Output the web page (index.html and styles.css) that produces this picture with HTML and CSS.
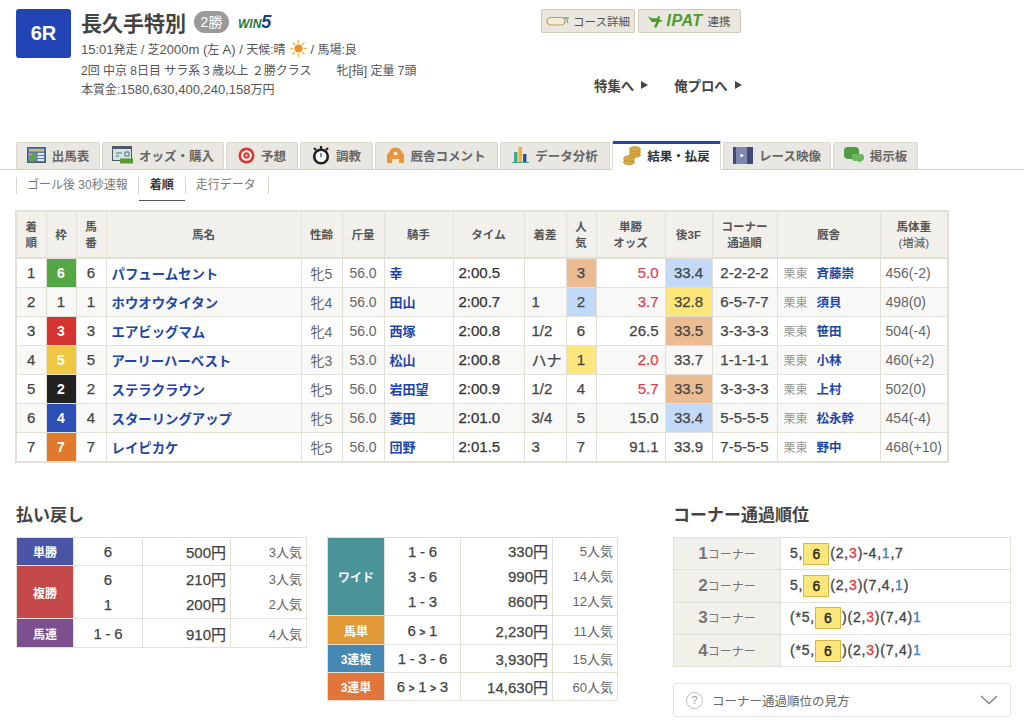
FILE: index.html
```html
<!DOCTYPE html>
<html lang="ja">
<head>
    <meta charset="UTF-8">
    <title>長久手特別 結果・払戻</title>
    <link rel="stylesheet" href="styles.css">
</head>
<body>
    <!-- Race header -->
    <div class="race-header">
        <div class="race-num">6R</div>
        <div class="race-info">
            <div class="race-title">
                <h1>長久手特別</h1>
                <span class="grade">2勝</span>
                <span class="win5"><i class="win5-a">WIN</i><i class="win5-b">5</i></span>
            </div>
            <div class="race-data1"><span><span class="en">15:01</span>発走 / 芝<span class="en">2000m (</span>左 <span class="en">A) /</span> 天候:晴</span>
                <svg class="sun" width="17" height="17" viewBox="0 0 17 17"><circle cx="8.5" cy="8.5" r="4" fill="#e8912c"/><g stroke="#ecb04e" stroke-width="1.4" stroke-linecap="round"><path d="M8.5 .8v2M8.5 14.2v2M.8 8.5h2M14.2 8.5h2M3 3l1.4 1.4M12.6 12.6L14 14M3 14l1.4-1.4M12.6 4.4L14 3"/></g></svg>
                <span><span class="en">/</span> 馬場:良</span></div>
            <div class="race-data2"><span class="race-class">2回 中京 8日目 サラ系３歳以上 ２勝クラス</span><span>牝[指] 定量 7頭</span></div>
            <div class="race-data3">本賞金:<span class="en">1580,630,400,240,158</span>万円</div>
        </div>
        <div class="race-side">
            <div class="side-buttons">
                <a class="side-btn course-btn">
                    <svg width="24" height="12" viewBox="0 0 24 12"><rect x="1" y="2.5" width="18" height="7.5" rx="3.7" fill="#f3ecd8" stroke="#c79a55" stroke-width="1.2"/><path d="M17 3h6M20 2l2 6" stroke="#4fa37a"/></svg>
                    コース詳細</a>
                <a class="side-btn ipat-btn">
                    <svg width="15" height="13" viewBox="0 0 16 13"><path d="M0 1l4 2h6l1-3 2 2-1 2 4 2-4 1-3 6H6l3-6H4L2 4z" fill="#4e9b2c"/></svg>
                    <i class="ipat-logo">IPAT</i><span class="ipat-text">連携</span></a>
            </div>
            <div class="side-links">
                <a>特集へ<span class="arrow"></span></a>
                <a>俺プロへ<span class="arrow"></span></a>
            </div>
        </div>
    </div>

    <!-- Tabs -->
    <ul class="tabs">
        <li><svg width="19" height="16" viewBox="0 0 19 16"><rect x=".5" y=".5" width="18" height="15" fill="#5b7ba8" stroke="#4c5a70"/><rect x="2" y="2" width="15" height="2.5" fill="#e3b85c"/><rect x="2" y="6" width="7" height="8" fill="#5aa34a"/><path d="M2 6h4l-4 4z" fill="#e69a3a"/><rect x="10.5" y="6" width="6.5" height="2" fill="#dfe8f0"/><rect x="10.5" y="9" width="6.5" height="2" fill="#dfe8f0"/><rect x="10.5" y="12" width="6.5" height="2" fill="#dfe8f0"/></svg>出馬表</li>
        <li><svg width="21" height="18" viewBox="0 0 21 18"><rect x=".5" y=".5" width="19" height="14" fill="#d5e3e3" stroke="#4d5a66"/><rect x=".5" y=".5" width="19" height="2.5" fill="#4d5a66"/><path d="M4 7h6M4 10h3M13 6h4v4h-4z" stroke="#48708c" fill="none"/><rect x="8" y="12.5" width="13" height="5" fill="#5d9a2e"/></svg>オッズ・購入</li>
        <li><svg width="17" height="17" viewBox="0 0 17 17"><circle cx="8.5" cy="8.5" r="8" fill="#d83a32"/><circle cx="8.5" cy="8.5" r="5.3" fill="#fff"/><circle cx="8.5" cy="8.5" r="3.2" fill="#d83a32"/><circle cx="8.5" cy="8.5" r="1.2" fill="#f5d5d0"/></svg>予想</li>
        <li><svg width="18" height="20" viewBox="0 0 18 20"><circle cx="9" cy="11.5" r="6.8" fill="#fff" stroke="#222" stroke-width="2.6"/><path d="M9 1v3M2 3l2 2M16 3l-2 2" stroke="#222" stroke-width="2.2"/><path d="M9 8v4" stroke="#3a5fb0" stroke-width="1.4"/></svg>調教</li>
        <li><svg width="17" height="16" viewBox="0 0 17 16"><path d="M0 16V8l4-6q4.5-3 9 0l4 6v8z" fill="#e8933f"/><path d="M5 16v-4h7v4z" fill="#fbe7c8"/><circle cx="8.5" cy="6.5" r="2" fill="#fbe7c8"/></svg>厩舎コメント</li>
        <li><svg width="17" height="18" viewBox="0 0 17 18"><rect x="2" y="6" width="3.5" height="10" fill="#3fa98f"/><rect x="6.5" y="1" width="3.5" height="15" fill="#efb12f"/><rect x="11" y="8" width="3.5" height="8" fill="#2b4f9e"/><path d="M0 16.5h17" stroke="#3fa98f"/></svg>データ分析</li>
        <li class="tab-on"><svg width="18" height="20" viewBox="0 0 18 20"><g fill="#d9ab3f" stroke="#a9822c" stroke-width=".6"><ellipse cx="12" cy="9" rx="5.5" ry="2.6"/><ellipse cx="12" cy="6" rx="5.5" ry="2.6"/><ellipse cx="12" cy="3.2" rx="5.5" ry="2.6"/><ellipse cx="6" cy="16" rx="5.5" ry="2.8"/><ellipse cx="6" cy="12.5" rx="5.5" ry="2.8"/></g></svg>結果・払戻</li>
        <li><svg width="20" height="17" viewBox="0 0 20 17"><rect width="20" height="17" fill="#3f4a78"/><rect x="3" width="11" height="17" fill="#7d88ae"/><path d="M7.5 6.5l3.5 2-3.5 2z" fill="#fff"/></svg>レース映像</li>
        <li><svg width="20" height="16" viewBox="0 0 20 16"><rect width="15" height="12" rx="4" fill="#4e9b44"/><path d="M8 7h9a3 3 0 0 1 3 3v1a3 3 0 0 1-3 3l-1 2-2-2h-3a3 3 0 0 1-3-3z" fill="#6cb55d"/></svg>掲示板</li>
    </ul>

    <!-- Sub navigation -->
    <ul class="subnav">
        <li>ゴール後 30秒速報</li>
        <li class="sub-on">着順</li>
        <li>走行データ</li>
    </ul>

    <!-- Race result -->
    <table class="result">
        <colgroup>
            <col class="c-30"><col class="c-30"><col class="c-30"><col class="c-name"><col class="c-41"><col class="c-42"><col class="c-jockey"><col class="c-time"><col class="c-42"><col class="c-30"><col class="c-odds"><col class="c-47"><col class="c-corner"><col class="c-stable"><col class="c-weight">
        </colgroup>
        <tr>
            <th>着<br>順</th><th>枠</th><th>馬<br>番</th><th>馬名</th><th>性齢</th><th>斤量</th><th>騎手</th><th>タイム</th><th>着差</th><th>人<br>気</th><th>単勝<br>オッズ</th><th>後3F</th><th>コーナー<br>通過順</th><th>厩舎</th><th>馬体重<br><span class="th-sub">(増減)</span></th>
        </tr>
        <tr>
            <td>1</td><td class="waku w6">6</td><td>6</td><td class="horse">パフュームセント</td><td class="lite">牝5</td><td class="lite">56.0</td><td class="jockey">幸</td><td class="time">2:00.5</td><td class="left"></td><td class="pop3">3</td><td class="odds low">5.0</td><td class="f1">33.4</td><td>2-2-2-2</td><td class="stable"><span>栗東</span><a>斉藤崇</a></td><td class="kg">456(-2)</td>
        </tr>
        <tr>
            <td>2</td><td>1</td><td>1</td><td class="horse">ホウオウタイタン</td><td class="lite">牝4</td><td class="lite">56.0</td><td class="jockey">田山</td><td class="time">2:00.7</td><td class="left">1</td><td class="f1">2</td><td class="odds low">3.7</td><td class="f2">32.8</td><td>6-5-7-7</td><td class="stable"><span>栗東</span><a>須貝</a></td><td class="kg">498(0)</td>
        </tr>
        <tr>
            <td>3</td><td class="waku w3">3</td><td>3</td><td class="horse">エアビッグマム</td><td class="lite">牝4</td><td class="lite">56.0</td><td class="jockey">西塚</td><td class="time">2:00.8</td><td class="left">1/2</td><td>6</td><td class="odds">26.5</td><td class="pop3">33.5</td><td>3-3-3-3</td><td class="stable"><span>栗東</span><a>笹田</a></td><td class="kg">504(-4)</td>
        </tr>
        <tr>
            <td>4</td><td class="waku w5">5</td><td>5</td><td class="horse">アーリーハーベスト</td><td class="lite">牝3</td><td class="lite">53.0</td><td class="jockey">松山</td><td class="time">2:00.8</td><td class="left">ハナ</td><td class="f2">1</td><td class="odds low">2.0</td><td>33.7</td><td>1-1-1-1</td><td class="stable"><span>栗東</span><a>小林</a></td><td class="kg">460(+2)</td>
        </tr>
        <tr>
            <td>5</td><td class="waku w2">2</td><td>2</td><td class="horse">ステラクラウン</td><td class="lite">牝5</td><td class="lite">56.0</td><td class="jockey">岩田望</td><td class="time">2:00.9</td><td class="left">1/2</td><td>4</td><td class="odds low">5.7</td><td class="pop3">33.5</td><td>3-3-3-3</td><td class="stable"><span>栗東</span><a>上村</a></td><td class="kg">502(0)</td>
        </tr>
        <tr>
            <td>6</td><td class="waku w4">4</td><td>4</td><td class="horse">スターリングアップ</td><td class="lite">牝5</td><td class="lite">56.0</td><td class="jockey">菱田</td><td class="time">2:01.0</td><td class="left">3/4</td><td>5</td><td class="odds">15.0</td><td class="f1">33.4</td><td>5-5-5-5</td><td class="stable"><span>栗東</span><a>松永幹</a></td><td class="kg">454(-4)</td>
        </tr>
        <tr>
            <td>7</td><td class="waku w7">7</td><td>7</td><td class="horse">レイピカケ</td><td class="lite">牝5</td><td class="lite">56.0</td><td class="jockey">団野</td><td class="time">2:01.5</td><td class="left">3</td><td>7</td><td class="odds">91.1</td><td>33.9</td><td>7-5-5-5</td><td class="stable"><span>栗東</span><a>野中</a></td><td class="kg">468(+10)</td>
        </tr>
    </table>

    <!-- Payouts and corners -->
    <div class="bottom">
        <div class="pay-col">
            <h2>払い戻し</h2>
            <table class="pay">
                <colgroup><col class="p-label"><col class="p-l-num"><col class="p-l-yen"><col></colgroup>
                <tr class="r28"><th class="tan">単勝</th><td class="num">6</td><td class="yen">500円</td><td class="ninki">3人気</td></tr>
                <tr class="r53"><th class="fuku">複勝</th><td class="num multi">6<br>1</td><td class="yen multi">210円<br>200円</td><td class="ninki multi">3人気<br>2人気</td></tr>
                <tr class="r29"><th class="uren">馬連</th><td class="num">1 - 6</td><td class="yen">910円</td><td class="ninki">4人気</td></tr>
            </table>
        </div>
        <div class="pay-col pay-col2">
            <table class="pay">
                <colgroup><col class="p-label"><col class="p-c-num"><col class="p-c-yen"><col></colgroup>
                <tr class="r78"><th class="wide">ワイド</th><td class="num multi">1 - 6<br>3 - 6<br>1 - 3</td><td class="yen multi">330円<br>990円<br>860円</td><td class="ninki multi">5人気<br>14人気<br>12人気</td></tr>
                <tr class="r29"><th class="utan">馬単</th><td class="num">6 <span class="gt">&gt;</span> 1</td><td class="yen">2,230円</td><td class="ninki">11人気</td></tr>
                <tr class="r28"><th class="fuku3">3連複</th><td class="num">1 - 3 - 6</td><td class="yen">3,930円</td><td class="ninki">15人気</td></tr>
                <tr class="r28"><th class="tan3">3連単</th><td class="num">6 <span class="gt">&gt;</span> 1 <span class="gt">&gt;</span> 3</td><td class="yen">14,630円</td><td class="ninki">60人気</td></tr>
            </table>
        </div>
        <div class="corner-col">
            <h2>コーナー通過順位</h2>
            <table class="corner">
                <tr><th><b>1</b>コーナー</th><td>5,<span class="top">6</span>(2,<span class="red">3</span>)-4,<span class="blue">1</span>,7</td></tr>
                <tr><th><b>2</b>コーナー</th><td>5,<span class="top">6</span>(2,<span class="red">3</span>)(7,4,<span class="blue">1</span>)</td></tr>
                <tr><th><b>3</b>コーナー</th><td>(*5,<span class="top">6</span>)(2,<span class="red">3</span>)(7,4)<span class="blue">1</span></td></tr>
                <tr><th><b>4</b>コーナー</th><td>(*5,<span class="top">6</span>)(2,<span class="red">3</span>)(7,4)<span class="blue">1</span></td></tr>
            </table>
            <div class="help">
                <span class="help-mark">?</span>
                <span class="help-text">コーナー通過順位の見方</span>
                <svg width="18" height="10" viewBox="0 0 18 10"><path d="M1 1l8 7.5L17 1" fill="none" stroke="#888" stroke-width="1.6"/></svg>
            </div>
        </div>
    </div>
</body>
</html>
```

FILE: styles.css
```css
/* Basic reset */
* {
    margin: 0;
    padding: 0;
    box-sizing: border-box;
}

body {
    font-family: "Liberation Sans", "Noto Sans CJK JP", sans-serif;
    background-color: #fff;
    color: #333;
    font-size: 12px;
}

ul {
    list-style: none;
}

/* Race header */
.race-header {
    display: flex;
    height: 141px;
    padding: 9px 0 0 16px;
}

.race-num {
    width: 55px;
    height: 49px;
    background-color: #2344b4;
    border-radius: 3px;
    color: #fff;
    font-size: 20px;
    font-weight: bold;
    line-height: 49px;
    text-align: center;
}

.race-info {
    width: 460px;
    margin-left: 10px;
}

.race-title {
    display: flex;
    align-items: center;
    height: 28px;
    margin-top: -1px;
}

.race-title h1 {
    font-size: 21px;
    font-weight: bold;
    color: #444;
}

.grade {
    width: 35px;
    height: 22px;
    margin-left: 8px;
    background-color: #999;
    border-radius: 11px;
    color: #fff;
    font-size: 14px;
    line-height: 22px;
    text-align: center;
}

.win5 {
    margin-left: 9px;
    font-weight: bold;
    font-size: 14px;
}

.win5-a {
    color: #1d7a3c;
    font-size: 12px;
}

.win5-b {
    color: #1c3d80;
    font-size: 18px;
}

.en {
    font-size: 13px;
}

.race-data1 {
    display: flex;
    align-items: center;
    gap: 4px;
    margin-top: 3px;
    height: 18px;
    color: #555;
}

.race-data2 {
    margin-top: 5px;
    height: 18px;
    line-height: 18px;
    color: #555;
}

.race-class {
    margin-right: 25px;
}

.race-data3 {
    margin-top: 1px;
    height: 18px;
    line-height: 18px;
    color: #555;
}

/* Buttons right of the title */
.side-buttons {
    display: flex;
    gap: 3px;
}

.side-btn {
    display: flex;
    align-items: center;
    justify-content: center;
    gap: 3px;
    height: 24px;
    background-color: #e9e7e0;
    border: 1px solid #cfcbbd;
    border-radius: 2px;
    color: #555;
    font-size: 11.5px;
}

.course-btn {
    width: 94px;
}

.ipat-btn {
    width: 103px;
}

.ipat-logo {
    color: #4e9b2c;
    font-size: 16px;
    font-weight: bold;
    letter-spacing: .5px;
}

.ipat-text {
    margin-left: 2px;
}

.side-links {
    display: flex;
    gap: 26px;
    margin: 42px 0 0 53px;
    font-weight: bold;
    color: #444;
    font-size: 13.4px;
}

.side-links a {
    display: flex;
    align-items: center;
}

.arrow {
    width: 0;
    height: 0;
    margin-left: 7px;
    border-left: 7px solid #444;
    border-top: 4px solid transparent;
    border-bottom: 4px solid transparent;
}

/* Tabs */
.tabs {
    display: grid;
    grid-template-columns: 84px 122px 72px 73px 123px 110px 109px 108px 85px;
    column-gap: 2px;
    align-items: end;
    height: 29px;
    padding-left: 16px;
    border-bottom: 1px solid #cfcdc4;
}

.tabs li {
    display: flex;
    align-items: center;
    justify-content: center;
    gap: 6px;
    height: 27px;
    padding-bottom: 2px;
    background-color: #e9e7e1;
    border: 1px solid #dbd8cf;
    border-bottom: none;
    border-radius: 2px 2px 0 0;
    color: #666;
    font-size: 12.5px;
    font-weight: bold;
}

.tabs .tab-on {
    height: 29px;
    background-color: #fff;
    border: 1px solid #dbd8cf;
    border-top: 3px solid #2344b4;
    border-bottom: 1px solid #fff;
    margin-bottom: -1px;
    color: #333;
}

/* Sub navigation */
.subnav {
    display: flex;
    height: 17px;
    margin: 7px 0 16px 16px;
}

.subnav li {
    height: 17px;
    padding: 0 11px 0 10px;
    border-left: 1px solid #d8d6cf;
    color: #777;
    line-height: 17px;
    font-size: 12px;
}

.subnav li:last-child {
    padding-right: 12px;
    border-right: 1px solid #d8d6cf;
}

.subnav li:nth-child(1) {
    padding-right: 10px;
}

.subnav .sub-on {
    position: relative;
    width: 47px;
    padding: 0;
    text-align: center;
    font-weight: bold;
    color: #333;
}

.sub-on::after {
    content: "";
    position: absolute;
    left: 0;
    right: 0;
    bottom: -7px;
    height: 1px;
    background-color: #555;
}

/* Result table */
.result {
    table-layout: fixed;
    width: 933px;
    margin-left: 15px;
    border-collapse: collapse;
    border: 2px solid #e3e0d8;
}

.c-30 { width: 30px; }
.c-name { width: 195px; }
.c-41 { width: 41px; }
.c-42 { width: 42px; }
.c-jockey { width: 69px; }
.c-time { width: 71px; }
.c-odds { width: 69px; }
.c-47 { width: 47px; }
.c-corner { width: 65px; }
.c-stable { width: 103px; }
.c-weight { width: 68px; }

.result th {
    height: 47px;
    background-color: #f2f0ea;
    border: 1px solid #e3e0d8;
    border-bottom-width: 2px;
    color: #555;
    font-size: 11.5px;
    line-height: 16px;
}

.th-sub {
    font-weight: normal;
}

.result td {
    height: 29px;
    border: 1px solid #e3e0d8;
    font-size: 15px;
    text-align: center;
    color: #444;
    white-space: nowrap;
    -webkit-text-stroke: .25px;
}

.result tr:last-child td {
    height: 30px;
}

.result tr:nth-child(2n+3) td {
    background-color: #f8f8f6;
}

.result tr td.horse,
.result tr td.jockey {
    padding-left: 5px;
    color: #1e46a8;
    font-size: 13.4px;
    font-weight: bold;
    text-align: left;
    -webkit-text-stroke: 0;
}

.result tr td.jockey {
    font-size: 13px;
}

.result td.lite {
    color: #666;
    font-size: 14px;
    -webkit-text-stroke: 0;
}

.result td.time {
    padding-left: 5px;
    text-align: left;
    color: #333;
}

.result td.left {
    padding-left: 7px;
    text-align: left;
}

.result td.odds {
    padding-right: 6px;
    text-align: right;
}

.result td.low {
    color: #d9434e;
}

/* Frame number colours */
.result tr td.waku {
    font-weight: bold;
    font-size: 14px;
    -webkit-text-stroke: 0;
}

.result tr td.w2 { background-color: #222; color: #fff; }
.result tr td.w3 { background-color: #d63333; color: #fff; }
.result tr td.w4 { background-color: #2b4fb5; color: #fff; }
.result tr td.w5 { background-color: #efc743; color: #fff; }
.result tr td.w6 { background-color: #55a745; color: #fff; }
.result tr td.w7 { background-color: #e0792b; color: #fff; }

/* Rank highlights */
.result tr td.f1 { background-color: #c2d9f7; }
.result tr td.f2 { background-color: #fde67c; }
.result tr td.pop3 { background-color: #ebbc92; }

.result td.stable {
    padding-left: 6px;
    text-align: left;
    font-size: 12px;
    -webkit-text-stroke: 0;
}

.stable span {
    display: inline-block;
    width: 33px;
    color: #999;
}

.stable a {
    color: #1e46a8;
    font-size: 12.5px;
    font-weight: bold;
}

.result td.kg {
    padding-left: 5px;
    text-align: left;
    color: #666;
    font-size: 14px;
    -webkit-text-stroke: 0;
}

/* Payouts and corners */
.bottom {
    display: flex;
    margin: 40px 0 0 16px;
}

h2 {
    height: 34px;
    font-size: 17px;
    font-weight: bold;
    line-height: 25px;
    color: #444;
}

.pay-col {
    width: 291px;
}

.pay-col2 {
    margin-left: 20px;
    padding-top: 34px;
}

.pay {
    table-layout: fixed;
    width: 291px;
    border-collapse: collapse;
    border: 1px solid #e3e0d8;
}

.p-label { width: 57px; }
.p-l-num { width: 69px; }
.p-l-yen { width: 88px; }
.p-c-num { width: 76px; }
.p-c-yen { width: 92px; }

.r28 { height: 28px; }
.r29 { height: 29px; }
.r53 { height: 53px; }
.r78 { height: 78px; }

.pay th {
    border: 1px solid #e3e0d8;
    color: #fff;
    font-size: 12px;
}

.pay td {
    border: 1px solid #e3e0d8;
    font-size: 15px;
    color: #444;
    -webkit-text-stroke: .25px;
}

.pay td.multi {
    line-height: 25px;
}

.pay .num {
    text-align: center;
    word-spacing: -.5px;
}

.gt {
    font-size: 10px;
    font-weight: bold;
}

.pay .yen {
    padding-right: 4px;
    text-align: right;
}

.pay td.ninki {
    padding-right: 4px;
    text-align: right;
    font-size: 13px;
    color: #666;
    -webkit-text-stroke: 0;
}

.tan { background-color: #4a55a6; }
.fuku { background-color: #c44a4a; }
.uren { background-color: #7c4f90; }
.wide { background-color: #4a9398; }
.utan { background-color: #e29a38; }
.fuku3 { background-color: #4488b4; }
.tan3 { background-color: #e2763a; }

.corner-col {
    width: 338px;
    margin-left: 55px;
}

.corner {
    width: 338px;
    border-collapse: collapse;
    border: 1px solid #e3e0d8;
}

.corner th {
    width: 107px;
    height: 32.3px;
    background-color: #f2f0ea;
    border: 1px solid #e3e0d8;
    color: #777;
    font-size: 12px;
    font-weight: normal;
}

.corner th b {
    font-size: 17px;
}

.corner td {
    padding-left: 9px;
    border: 1px solid #e3e0d8;
    font-size: 14px;
    color: #444;
    letter-spacing: .8px;
    -webkit-text-stroke: .35px;
}

.top {
    display: inline-block;
    width: 26px;
    height: 22px;
    margin: 0 1px 0 0;
    background-color: #fde67c;
    border: 1px solid #d8b64a;
    color: #222;
    font-size: 14px;
    letter-spacing: 0;
    line-height: 20px;
    text-align: center;
    vertical-align: middle;
}

.red { color: #e23b3b; }
.blue { color: #3f7fd0; }

.help {
    display: flex;
    align-items: center;
    height: 34px;
    margin-top: 16px;
    padding: 0 12px;
    background-color: #fff;
    border: 1px solid #e4e2dc;
    border-radius: 3px;
    color: #666;
}

.help-mark {
    width: 17px;
    height: 17px;
    border: 1px solid #bbb;
    border-radius: 50%;
    color: #999;
    font-size: 11px;
    line-height: 15px;
    text-align: center;
}

.help-text {
    flex: 1;
    margin-left: 9px;
    font-size: 12.5px;
}
```
